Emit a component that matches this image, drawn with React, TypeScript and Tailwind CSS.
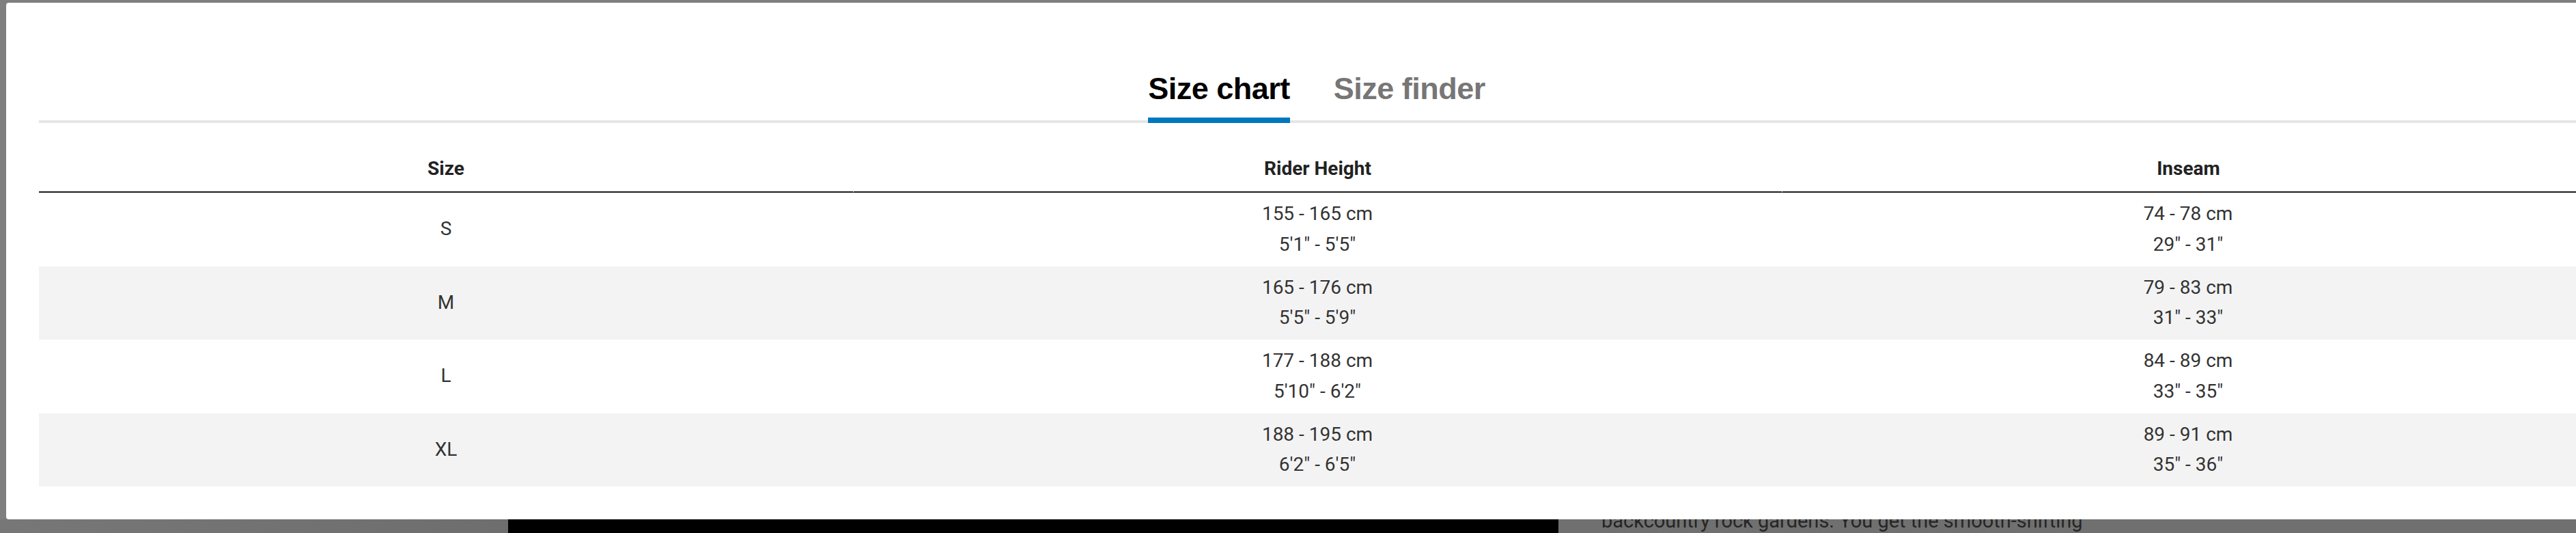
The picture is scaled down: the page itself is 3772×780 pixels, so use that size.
import React from "react";

const rows = [
    { size: "S", height: ["155 - 165 cm", "5'1\" - 5'5\""], inseam: ["74 - 78 cm", "29\" - 31\""] },
    { size: "M", height: ["165 - 176 cm", "5'5\" - 5'9\""], inseam: ["79 - 83 cm", "31\" - 33\""] },
    { size: "L", height: ["177 - 188 cm", "5'10\" - 6'2\""], inseam: ["84 - 89 cm", "33\" - 35\""] },
    { size: "XL", height: ["188 - 195 cm", "6'2\" - 6'5\""], inseam: ["89 - 91 cm", "35\" - 36\""] },
];

function Cell({ lines }: { lines: string[] }) {
    return (
        <div className="flex flex-col items-center justify-center py-[9px] leading-[44.75px]">
            {lines.map((l) => (
                <span key={l}>{l}</span>
            ))}
        </div>
    );
}

export default function App() {
    return (
        <div className="relative h-[780px] w-[3772px] overflow-hidden bg-[#7f7f7f]">
            {/* page behind the backdrop */}
            <div className="flex h-full flex-col">
                <div className="h-[760px]" />
                <div className="flex h-[20px] overflow-hidden">
                    <div className="w-[744px] bg-gradient-to-r from-[#777777] to-[#6e6e6e]" />
                    <div className="w-[1538px] bg-black" />
                    <div className="flex-1 bg-[#707070] pl-[63px]">
                        <p className="-mt-[16px] whitespace-nowrap font-['Roboto',sans-serif] text-[29px] leading-[36px] text-[#262626]">
                            backcountry rock gardens. You get the smooth-shifting
                        </p>
                    </div>
                </div>
            </div>

            {/* modal */}
            <div className="absolute left-[9px] top-[4px] h-[756px] w-[3838px] rounded-[4px] bg-white px-[48px]">
                {/* tabs */}
                <div className="flex justify-center gap-[64px] border-b-4 border-[#e6e6e6] pt-[100px] font-['Liberation_Sans',Arial,sans-serif] text-[45px] font-bold leading-[52px] tracking-[-0.5px]">
                    <div className="-mb-1 border-b-8 border-[#0078be] pb-[16px] text-black">
                        Size chart
                    </div>
                    <div className="pb-[16px] text-[#767676]">Size finder</div>
                </div>

                {/* table */}
                <div className="mt-[37px] font-['Roboto',sans-serif] text-[28px] text-[#333333]">
                    <div className="grid grid-cols-[1192px_1360px_1190px] font-bold text-[#222222]">
                        <div className="border-b-2 border-[#1c1c1c] pb-[11px] pt-[7px] text-center leading-[45px]">
                            Size
                        </div>
                        <div className="border-b-2 border-l border-[#1c1c1c] border-l-white pb-[11px] pt-[7px] text-center leading-[45px]">
                            Rider Height
                        </div>
                        <div className="border-b-2 border-l border-[#1c1c1c] border-l-white pb-[11px] pt-[7px] text-center leading-[45px]">
                            Inseam
                        </div>
                    </div>
                    {rows.map((r, i) => (
                        <div
                            key={r.size}
                            className={
                                i % 2 === 1 ?
                                    "grid grid-cols-[1192px_1360px_1190px] bg-[#f3f3f3]"
                                :   "grid grid-cols-[1192px_1360px_1190px]"
                            }
                        >
                            <Cell lines={[r.size]} />
                            <Cell lines={r.height} />
                            <Cell lines={r.inseam} />
                        </div>
                    ))}
                </div>
            </div>
        </div>
    );
}
